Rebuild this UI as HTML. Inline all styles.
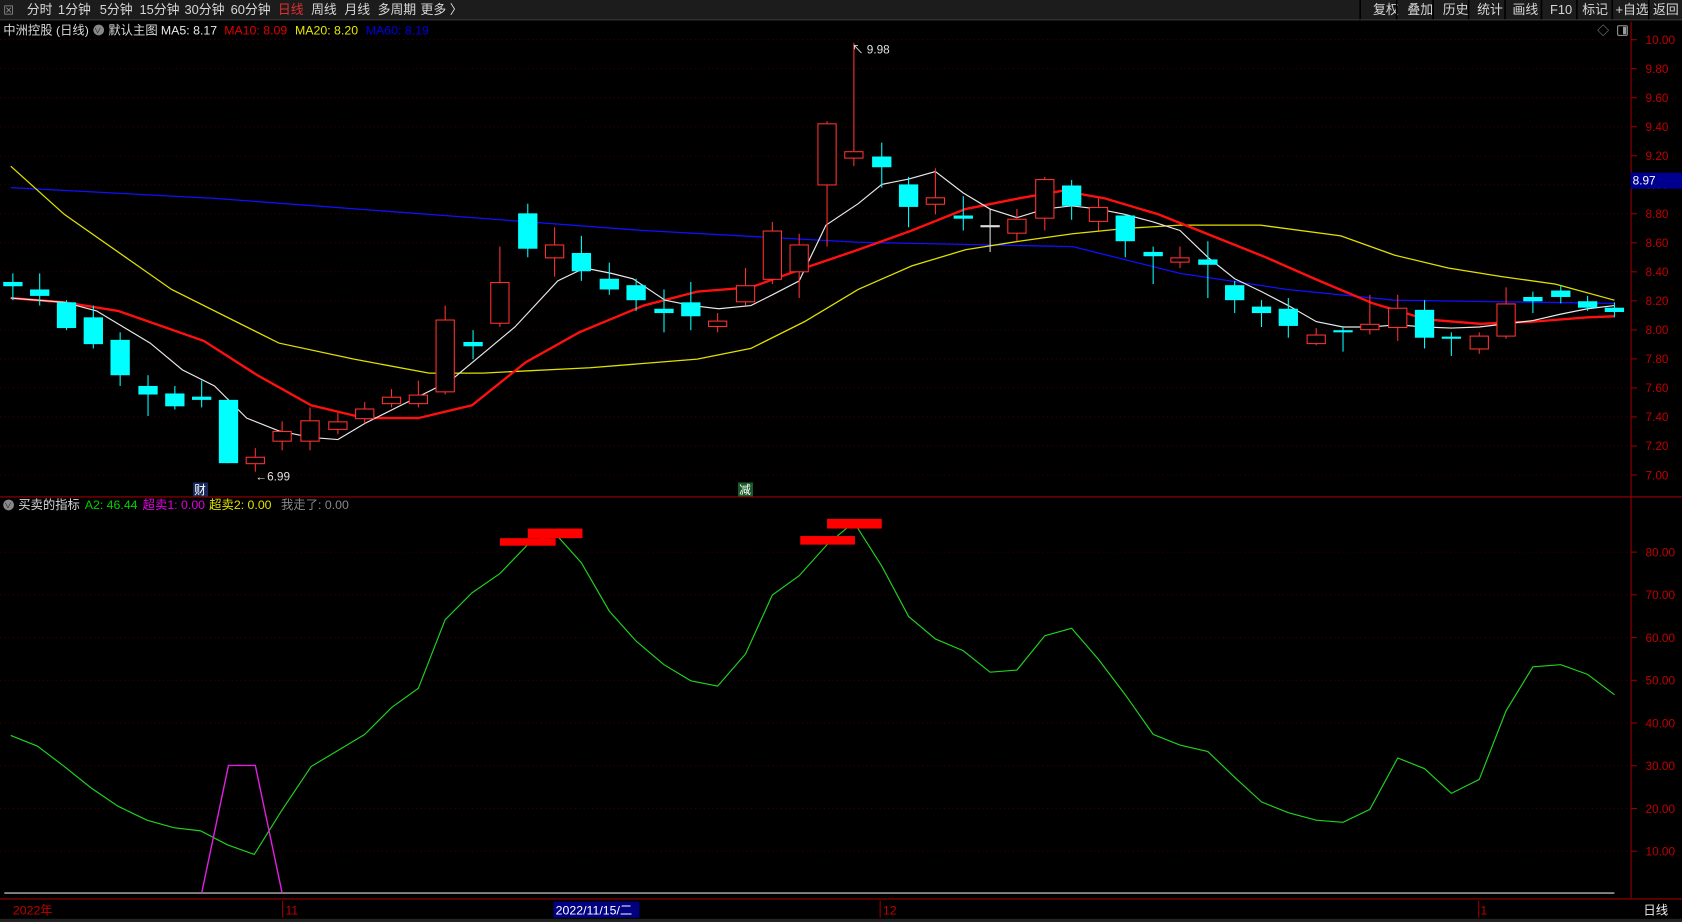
<!DOCTYPE html>
<html><head><meta charset="utf-8"><style>
html,body{margin:0;padding:0;background:#000;overflow:hidden}
svg{display:block}
text{font-family:"Liberation Sans","Noto Sans CJK SC",sans-serif}
</style></head><body>
<svg id="s" width="1682" height="922" viewBox="0 0 1568 860" preserveAspectRatio="none" xmlns="http://www.w3.org/2000/svg">
<rect width="1568" height="860" fill="#000"/>
<!-- top bar -->
<rect x="0" y="0" width="1568" height="18" fill="#1c1c1c"/>
<line x1="0" y1="18.5" x2="1568" y2="18.5" stroke="#3a3a3a"/>
<g font-size="12" fill="#d8d8d8">
<text x="3" y="13" font-size="10" fill="#999">⊠</text>
<text x="25" y="13">分时</text><text x="54" y="13">1分钟</text><text x="93" y="13">5分钟</text>
<text x="130" y="13">15分钟</text><text x="172" y="13">30分钟</text><text x="215" y="13">60分钟</text>
<text x="259" y="13" fill="#e03030">日线</text><text x="290" y="13">周线</text><text x="321" y="13">月线</text>
<text x="352" y="13">多周期</text><text x="392" y="13">更多 〉</text>
</g>
<g font-size="12" fill="#d8d8d8">
<rect x="1368" y="0" width="1" height="18" fill="#333"/>
<text x="1280" y="13">复权</text><text x="1312" y="13">叠加</text><text x="1345" y="13">历史</text>
<text x="1377" y="13">统计</text><text x="1410" y="13">画线</text><text x="1445" y="13">F10</text>
<text x="1475" y="13">标记</text><text x="1506" y="13">+自选</text><text x="1541" y="13">返回</text>
</g>
<g stroke="#000" stroke-width="1.5"><line x1="1369" y1="0" x2="1369" y2="18"/><line x1="1403" y1="0" x2="1403" y2="18"/><line x1="1437" y1="0" x2="1437" y2="18"/><line x1="1470" y1="0" x2="1470" y2="18"/><line x1="1503" y1="0" x2="1503" y2="18"/><line x1="1537" y1="0" x2="1537" y2="18"/><line x1="1336" y1="0" x2="1336" y2="18"/><line x1="1302" y1="0" x2="1302" y2="18"/><line x1="1268" y1="0" x2="1268" y2="18"/></g>
<!-- legend main -->
<g font-size="11.5">
<text x="3" y="32" fill="#d8d8d8">中洲控股 (日线)</text>
<circle cx="92" cy="28" r="5" fill="#888"/><text x="87.5" y="31" font-size="7" fill="#222">∨</text>
<text x="101" y="32" fill="#d8d8d8">默认主图</text>
<text x="150" y="32" fill="#e8e8e8">MA5: 8.17</text>
<text x="209" y="32" fill="#e00000">MA10: 8.09</text>
<text x="275" y="32" fill="#e8e800">MA20: 8.20</text>
<text x="341" y="32" fill="#0000e0">MA60: 8.19</text>
</g>
<text x="1489" y="32" font-size="11" fill="#999">◇</text>
<rect x="1508" y="24" width="9" height="9" fill="none" stroke="#999" rx="1"/><rect x="1513" y="25" width="3" height="7" fill="#999"/>
<!-- right axis -->
<line x1="1520.5" y1="20" x2="1520.5" y2="838" stroke="#900"/>
<line x1="0" y1="463.5" x2="1568" y2="463.5" stroke="#900"/>
<line x1="0" y1="838.5" x2="1568" y2="838.5" stroke="#900"/>
<g id="axis" font-size="11" fill="#c00000"></g>
<g id="grid"></g>
<rect x="1520" y="161" width="48" height="15" fill="#000090"/>
<text x="1522" y="172" font-size="11" fill="#fff">8.97</text>
<!-- lines -->
<g id="mas" fill="none" stroke-width="1.3"></g>
<g id="cand"></g>
<g font-size="11" fill="#e0e0e0">
<text x="794" y="50">↖ 9.98</text>
<text x="238" y="448">←6.99</text>
</g>
<rect x="180" y="450" width="14" height="13" fill="#1a2a5a"/><text x="181" y="461" font-size="11" fill="#fff">财</text>
<rect x="688" y="450" width="14" height="13" fill="#1a5a2a"/><text x="689" y="461" font-size="11" fill="#fff">减</text>
<!-- indicator legend -->
<g font-size="11.5">
<circle cx="8" cy="471" r="5" fill="#888"/><text x="4" y="474" font-size="7" fill="#222">∨</text>
<text x="17" y="475" fill="#d8d8d8">买卖的指标</text>
<text x="79" y="475" fill="#00d000">A2: 46.44</text>
<text x="133" y="475" fill="#e000e0">超卖1: 0.00</text>
<text x="195" y="475" fill="#e0e000">超卖2: 0.00</text>
<text x="262" y="475" fill="#888">我走了: 0.00</text>
</g>
<g id="ind"></g>
<!-- bottom axis -->
<g font-size="11.5" fill="#c00000">
<text x="12" y="853">2022年</text>
<line x1="263.5" y1="840" x2="263.5" y2="856" stroke="#900"/><text x="266" y="853">11</text>
<rect x="516" y="841" width="80" height="15" fill="#000080"/><text x="518" y="853" fill="#fff">2022/11/15/二</text>
<line x1="820.5" y1="840" x2="820.5" y2="856" stroke="#900"/><text x="823" y="853">12</text>
<line x1="1378.5" y1="840" x2="1378.5" y2="856" stroke="#900"/><text x="1380" y="853">1</text>
<text x="1532" y="853" fill="#eee">日线</text>
</g>
<rect x="0" y="857" width="1568" height="3" fill="#222"/>
</svg>
<script>
var NS="http://www.w3.org/2000/svg";
function el(p,t,a){var e=document.createElementNS(NS,t);for(var k in a)e.setAttribute(k,a[k]);document.getElementById(p).appendChild(e);return e;}
var ax=document.getElementById('axis');
for(var k=0;k<=15;k++){var y=37+k*27.07;var p=(10-k*0.2).toFixed(2);
 var t=el('axis','text',{x:1534,y:y+4});t.textContent=p;
 el('axis','line',{x1:1520,y1:y,x2:1526,y2:y,stroke:'#900'});
 el('grid','line',{x1:0,y1:y,x2:1520,y2:y,stroke:'#3a0000','stroke-dasharray':'1 3'});}
for(var v=10;v<=80;v+=10){var y=794-(v-10)*3.986;var t=el('axis','text',{x:1534,y:y+4});t.textContent=v.toFixed(2);
 el('axis','line',{x1:1520,y1:y,x2:1526,y2:y,stroke:'#900'});
 el('grid','line',{x1:0,y1:y,x2:1520,y2:y,stroke:'#3a0000','stroke-dasharray':'1 3'});}
var C=[[12,'c',263,267,255,280],[37,'c',270,276,255,285],[62,'c',282,306,280,308],[87,'c',296,321,285,325],[112,'c',317,350,310,360],[138,'c',360,368,350,388],[163,'c',367,379,360,382],[188,'c',370,373,355,380],[213,'c',373,432,372,432],[238,'r',426,432,418,440],[263,'r',402,411,393,420],[289,'r',392,411,380,420],[315,'r',393,400,385,405],[340,'r',381,390,375,395],[365,'r',370,376,363,380],[390,'r',368,376,355,380],[415,'r',298,365,285,368],[441,'c',319,323,308,335],[466,'r',263,301,230,305],[492,'c',199,232,190,240],[517,'r',228,240,212,258],[542,'c',236,253,220,262],[568,'c',260,270,245,275],[593,'c',266,280,260,290],[619,'c',288,292,270,310],[644,'c',282,295,263,308],[669,'r',299,304,292,310],[695,'r',266,281,250,285],[720,'r',215,260,207,265],[745,'r',228,253,218,278],[771,'r',115,172,113,230],[796,'r',141,147,40,155],[822,'c',146,156,133,175],[847,'c',172,193,165,212],[872,'r',184,190,157,200],[898,'c',201,204,183,215],[923,'w',210,212,195,235],[948,'r',204,217,195,225],[974,'r',167,203,165,215],[999,'c',173,192,168,205],[1024,'r',193,206,185,215],[1049,'c',201,225,200,240],[1075,'c',235,239,230,265],[1100,'r',240,244,230,250],[1126,'c',242,247,225,278],[1151,'c',266,280,262,292],[1176,'c',286,292,280,305],[1201,'c',288,304,278,315],[1227,'r',312,320,306,322],[1252,'c',308,310,305,328],[1277,'r',302,307,275,312],[1303,'r',287,305,275,318],[1328,'c',289,315,280,325],[1353,'c',314,316,310,332],[1379,'r',313,325,310,330],[1404,'r',283,313,268,316],[1429,'c',277,281,272,292],[1455,'c',271,277,266,283],[1480,'c',281,287,276,290],[1505,'c',287,291,282,296]];
C.forEach(function(c){var x=c[0],col=c[1]=='c'?'#00ffff':(c[1]=='r'?'#ff3030':'#dddddd');
 if(c[1]=='r'){el('cand','line',{x1:x,y1:c[4],x2:x,y2:c[2],stroke:col});el('cand','line',{x1:x,y1:c[3],x2:x,y2:c[5],stroke:col});
  el('cand','rect',{x:x-8.5,y:c[2]+0.5,width:17,height:Math.max(c[3]-c[2],1),fill:'#000',stroke:col});}
 else{el('cand','line',{x1:x,y1:c[4],x2:x,y2:c[5],stroke:col});el('cand','rect',{x:x-9,y:c[2],width:18,height:Math.max(c[3]-c[2],2),fill:col});}});
function pl(g,pts,col,w){el(g,'polyline',{points:pts,stroke:col,'stroke-width':w||1.3,fill:'none'});}
pl('mas','10,175 200,185 400,200 600,215 800,226 1000,230 1100,255 1200,270 1300,280 1505,283','#1010ff',1.2);
pl('mas','10,155 60,200 160,270 260,320 330,335 400,348 450,348 550,343 650,335 700,325 750,300 800,270 850,248 900,233 950,225 1000,218 1050,213 1100,210 1175,210 1250,220 1300,238 1350,250 1400,258 1450,265 1505,280','#e0e000',1.2);
pl('mas','10,278 60,282 110,290 190,318 240,350 290,378 340,390 390,390 440,378 490,338 540,310 600,285 650,272 700,268 750,250 800,233 850,215 900,195 950,185 990,178 1030,185 1080,200 1130,220 1180,240 1230,262 1280,283 1330,298 1380,302 1430,300 1480,296 1505,295','#ff1010',2.2);
pl('mas','10,278 60,282 90,290 140,320 170,345 200,360 230,390 260,402 290,408 315,410 340,395 380,375 420,355 450,330 480,305 520,262 545,250 570,255 590,260 620,280 645,285 670,288 700,285 720,275 745,262 770,210 800,190 822,172 847,167 872,160 898,180 923,195 948,203 974,195 999,192 1024,195 1049,200 1075,207 1100,215 1126,240 1151,260 1176,272 1201,285 1227,300 1252,305 1277,305 1303,303 1328,305 1353,306 1379,305 1404,302 1429,299 1455,293 1480,288 1505,285','#e8e8e8',1.1);
el('ind','line',{x1:4,y1:833,x2:1505,y2:833,stroke:'#999','stroke-width':1.5});
pl('ind','10,686 35,696 60,715 85,735 110,752 137,765 162,772 187,775 212,788 237,797 262,757 290,715 315,700 340,685 365,660 390,642 415,578 440,553 466,535 492,508 517,497 542,525 568,570 593,598 619,620 644,635 669,640 695,610 720,555 745,537 771,508 796,487 822,528 847,575 872,596 898,607 923,627 948,625 974,593 999,586 1024,615 1049,648 1075,685 1100,695 1126,701 1151,725 1176,748 1201,758 1227,765 1252,767 1277,755 1303,707 1328,717 1353,740 1379,727 1404,663 1429,622 1455,620 1480,629 1505,648','#20d020',1.1);
pl('ind','188,833 213,714 238,714 263,833','#e020e0',1.3);
[[466,502,52,7],[492,493,51,9],[746,500,51,8],[771,484,51,9]].forEach(function(r){el('ind','rect',{x:r[0],y:r[1],width:r[2],height:r[3],fill:'#ff0000'});});
</script>
</body></html>
